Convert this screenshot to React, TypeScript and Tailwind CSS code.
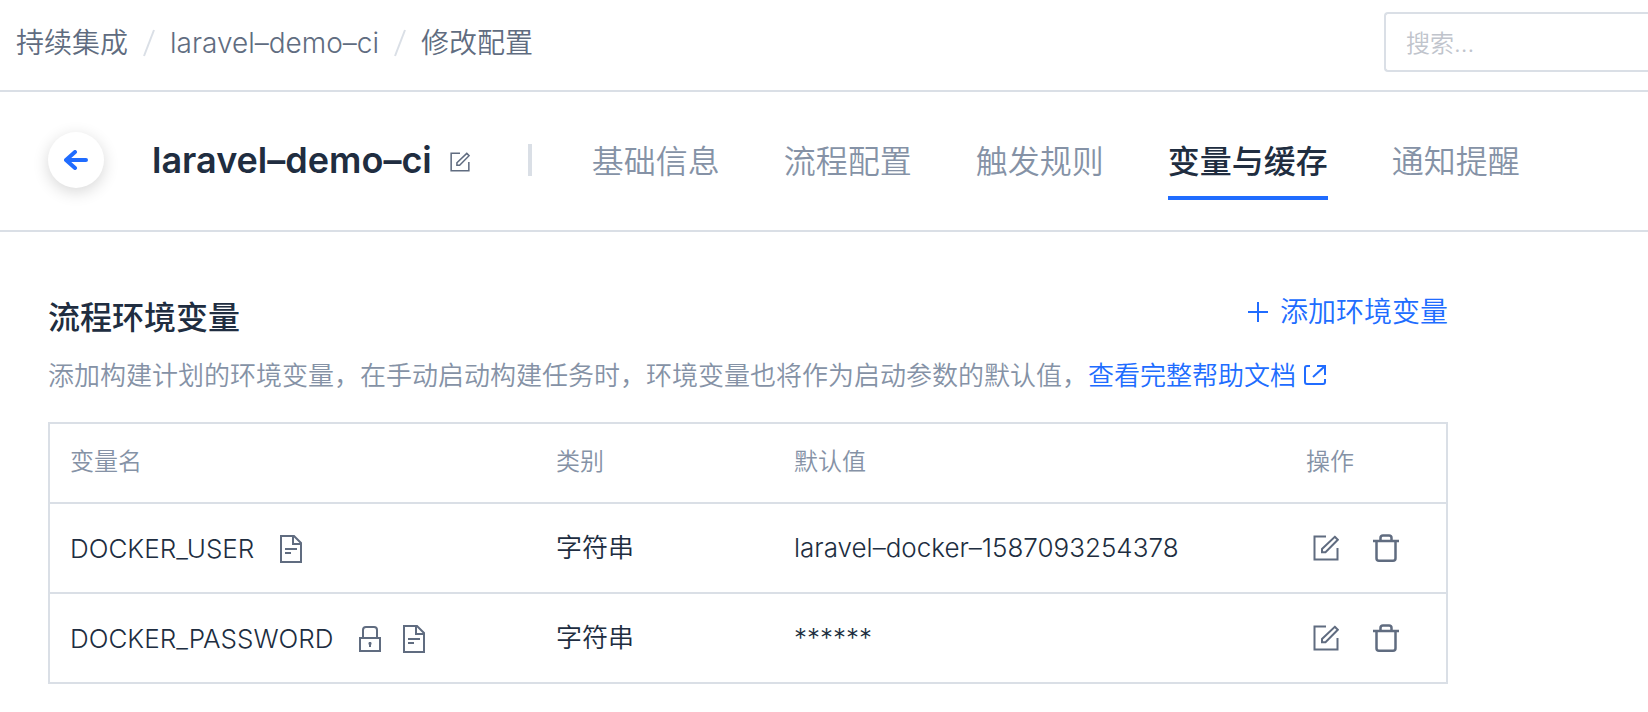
import type { ReactNode } from 'react';

type IconProps = { className?: string };

const EditIcon = ({ className }: IconProps) => (
  <svg
    className={className}
    viewBox="0 0 26 26"
    fill="none"
    stroke="currentColor"
    strokeWidth="2"
    aria-hidden="true"
  >
    <path d="M13 1.5H1.5v23h23V13" />
    <path d="M21.8 1.8 24.8 4.8 12.5 17.2H9V14Z" />
  </svg>
);

const TrashIcon = ({ className }: IconProps) => (
  <svg
    className={className}
    viewBox="0 0 26 28"
    fill="none"
    stroke="currentColor"
    strokeWidth="2.5"
    aria-hidden="true"
  >
    <path d="M0 7h26M7.5 7V4A2.5 2.5 0 0 1 10 1.5h6A2.5 2.5 0 0 1 18.5 4v3M3.5 7v17.2A2.5 2.5 0 0 0 6 26.7h14a2.5 2.5 0 0 0 2.5-2.5V7" />
  </svg>
);

const NoteIcon = ({ className }: IconProps) => (
  <svg
    className={className}
    viewBox="0 0 22 28"
    fill="none"
    stroke="currentColor"
    strokeWidth="2"
    aria-hidden="true"
  >
    <path d="M1 1h13l7 7v19H1zM13 1v8h8M5 14h12M5 18h6" />
  </svg>
);

const LockIcon = ({ className }: IconProps) => (
  <svg
    className={className}
    viewBox="0 0 22 26"
    fill="none"
    stroke="currentColor"
    strokeWidth="2"
    aria-hidden="true"
  >
    <path d="M1 12h20v13H1zM4 12V4a3 3 0 0 1 3-3h8a3 3 0 0 1 3 3v8M11 16v5M9.5 17.5h3" />
  </svg>
);

const ExternalIcon = ({ className }: IconProps) => (
  <svg
    className={className}
    viewBox="0 0 22 20"
    fill="none"
    stroke="currentColor"
    strokeWidth="2"
    aria-hidden="true"
  >
    <path d="M6 1H3a2 2 0 0 0-2 2v14a2 2 0 0 0 2 2h16a2 2 0 0 0 2-2v-3M13 1h8v9M21 1 9 12" />
  </svg>
);

const tabs = [
  { label: '基础信息' },
  { label: '流程配置' },
  { label: '触发规则' },
  { label: '变量与缓存', active: true },
  { label: '通知提醒' },
];

const variables = [
  {
    name: 'DOCKER_USER',
    type: '字符串',
    value: 'laravel–docker–1587093254378',
    secret: false,
  },
  { name: 'DOCKER_PASSWORD', type: '字符串', value: '******', secret: true },
];

const Crumb = ({ children }: { children: ReactNode }) => (
  <a href="#" className="text-[#606c80]">
    {children}
  </a>
);

const CrumbDivider = () => (
  <svg
    className="mx-[15px] h-7 w-3 text-[#dadfe6]"
    viewBox="0 0 12 28"
    stroke="currentColor"
    strokeWidth="2"
    aria-hidden="true"
  >
    <path d="M1 27 11 1" />
  </svg>
);

const TopBar = () => (
  <header className="flex h-[92px] items-center justify-between border-b-2 border-[#dadfe6] pl-4">
    <nav className="flex items-center pb-1 text-[28px] leading-10">
      <Crumb>持续集成</Crumb>
      <CrumbDivider />
      <Crumb>laravel–demo–ci</Crumb>
      <CrumbDivider />
      <Crumb>修改配置</Crumb>
    </nav>
    <input
      type="search"
      aria-label="搜索"
      placeholder="搜索..."
      className="mb-1.5 h-[60px] w-[264px] rounded-l border-2 border-r-0 border-[#dadfe6] px-5 pt-0.5 text-2xl placeholder:text-[#c0c4cc]"
    />
  </header>
);

const ProjectBar = () => (
  <div className="flex h-[140px] items-center border-b-2 border-[#dadfe6] pb-0.5 pl-12">
    <button
      type="button"
      aria-label="返回"
      className="flex size-14 items-center justify-center rounded-full bg-white text-[#206cff] shadow-[0_4px_16px_rgba(0,0,0,0.16)]"
    >
      <svg
        className="h-5 w-6"
        viewBox="0 0 24 20"
        fill="none"
        stroke="currentColor"
        strokeWidth="4"
        strokeLinecap="round"
        strokeLinejoin="round"
        aria-hidden="true"
      >
        <path d="M22 10H2M11 2 2 10l9 8" />
      </svg>
    </button>
    <h1 className="ml-12 text-4xl font-semibold text-[#202d40]">
      laravel–demo–ci
    </h1>
    <button
      type="button"
      aria-label="重命名"
      className="mt-1 ml-[18px] text-[#606c80]"
    >
      <EditIcon className="size-5" />
    </button>
    <span className="ml-[58px] h-8 w-1 bg-[#dadfe6]" />
    <nav className="ml-[60px] flex gap-16 text-[32px] leading-[48px]">
      {tabs.map((tab) => (
        <a
          key={tab.label}
          href="#"
          className={
            tab.active
              ? 'border-b-4 border-[#206cff] pt-[18px] pb-2.5 font-medium text-[#202d40]'
              : 'border-b-4 border-transparent pt-[18px] pb-2.5 text-[#8592a6]'
          }
        >
          {tab.label}
        </a>
      ))}
    </nav>
  </div>
);

const VariableTable = () => (
  <div className="mt-[26px] border-2 border-[#dadfe6]">
    <table className="w-full table-fixed border-separate border-spacing-0 text-left text-[26px] text-[#202d40]">
      <thead>
        <tr className="h-[78px] text-2xl text-[#8592a6]">
          <th className="px-5 pb-0.5 font-[350]">变量名</th>
          <th className="w-[238px] px-5 pb-0.5 font-[350]">类别</th>
          <th className="w-[512px] px-5 pb-0.5 font-[350]">默认值</th>
          <th className="w-[160px] px-5 pb-0.5 font-[350]">操作</th>
        </tr>
      </thead>
      <tbody>
        {variables.map((variable) => (
          <tr key={variable.name} className="h-[90px]">
            <td className="border-t-2 border-[#dadfe6] px-5">
              <div className="flex items-center gap-[26px]">
                {variable.name}
                <span className="flex items-center gap-[22px] pt-0.5 text-[#606c80]">
                  {variable.secret && (
                    <LockIcon className="h-[26px] w-[22px]" />
                  )}
                  <NoteIcon className="h-7 w-[22px]" />
                </span>
              </div>
            </td>
            <td className="border-t-2 border-[#dadfe6] px-5 pb-0.5">
              {variable.type}
            </td>
            <td className="border-t-2 border-[#dadfe6] px-5 pb-0.5">
              {variable.value}
            </td>
            <td className="border-t-2 border-[#dadfe6] pl-[27px]">
              <div className="flex items-center gap-[34px] text-[#606c80]">
                <button type="button" aria-label="编辑">
                  <EditIcon className="size-[26px]" />
                </button>
                <button type="button" aria-label="删除">
                  <TrashIcon className="h-7 w-[26px]" />
                </button>
              </div>
            </td>
          </tr>
        ))}
      </tbody>
    </table>
  </div>
);

export default function App() {
  return (
    <div className="bg-white font-['Inter','Noto_Sans_CJK_SC',sans-serif] font-[350]">
      <TopBar />
      <ProjectBar />
      <main className="pt-14 pr-[200px] pb-7 pl-12">
        <div className="flex items-start justify-between">
          <h2 className="pt-1.5 text-[32px] leading-[48px] font-medium text-[#202d40]">
            流程环境变量
          </h2>
          <button
            type="button"
            className="flex items-center gap-3 text-[28px] leading-[48px] text-[#206cff]"
          >
            <svg
              className="size-5"
              viewBox="0 0 20 20"
              stroke="currentColor"
              strokeWidth="2"
              aria-hidden="true"
            >
              <path d="M10 0v20M0 10h20" />
            </svg>
            添加环境变量
          </button>
        </div>
        <p className="mt-3.5 text-[26px] leading-10 text-[#8592a6]">
          添加构建计划的环境变量，在手动启动构建任务时，环境变量也将作为启动参数的默认值，
          <a href="#" className="text-[#206cff]">
            查看完整帮助文档
            <ExternalIcon className="ml-2 inline h-5 w-[22px] align-baseline" />
          </a>
        </p>
        <VariableTable />
      </main>
    </div>
  );
}
